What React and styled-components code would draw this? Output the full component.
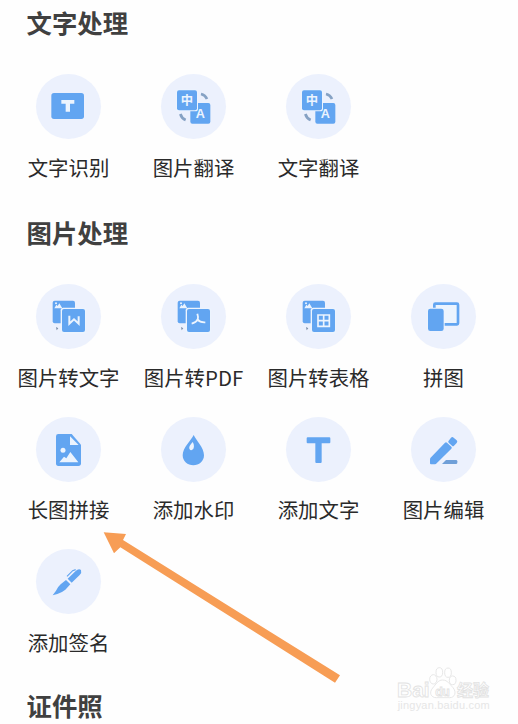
import styled, { createGlobalStyle } from 'styled-components';

const GlobalStyle = createGlobalStyle`
	* {
		box-sizing: border-box;
	}

	body {
		margin: 0;
		background: #fefefe;
		font-family: 'Noto Sans CJK SC', sans-serif;
	}
`;

const PageWrapper = styled.main`
	position: relative;
	height: 724px;
	padding: 4px 0 0 6px;
	overflow: hidden;
`;

const Section = styled.section`
	margin-bottom: 36px;

	&:last-of-type {
		margin: -2.5px 0 0;
	}
`;

const Title = styled.h2`
	height: 36px;
	margin: 0;
	padding-left: 20.5px;
	font-size: 25.4px;
	font-weight: 700;
	line-height: 36px;
	color: #404040;
`;

const Grid = styled.div`
	display: grid;
	grid-template-columns: repeat(4, 125px);
	row-gap: 28.5px;
	margin-top: 34px;
`;

const Tool = styled.div`
	display: flex;
	flex-direction: column;
	align-items: center;
	height: 104px;
`;

const Badge = styled.div`
	width: 65px;
	height: 65px;
	flex-shrink: 0;
	border-radius: 50%;
	background: #ecf1fd;

	svg {
		display: block;
		width: 100%;
		height: 100%;
	}
`;

const Label = styled.span`
	margin-top: 12.5px;
	font-size: 20.4px;
	font-weight: 400;
	line-height: 30px;
	white-space: nowrap;
	color: #2a2a2a;
`;

const Arrow = styled.svg`
	position: absolute;
	left: 100px;
	top: 530px;
	width: 245px;
	height: 156px;
`;

const Watermark = styled.svg`
	position: absolute;
	right: 0;
	bottom: 0;
	width: 138px;
	height: 74px;
`;

const BLUE = '#62a5f1';
const PALE = '#ecf4fe';

const IconBase = ({ children }) => (
	<svg viewBox="18 18 195 195" fill={BLUE}>{children}</svg>
);

const TextScan = () => (
	<IconBase>
		<rect x="64" y="75" width="98" height="78" rx="8" />
		<path d="M94 96h39v11h-13v24h-13v-24H94z" fill={PALE} />
	</IconBase>
);

const Translate = () => (
	<IconBase>
		<rect x="106" y="105" width="60" height="62" rx="6" />
		<rect x="63" y="64" width="66" height="66" rx="8" fill={PALE} />
		<rect x="66" y="67" width="60" height="60" rx="6" />
		<g fill={PALE} fontWeight="700" textAnchor="middle">
			<text x="96" y="110" fontSize="37" fontFamily="Noto Sans CJK SC">中</text>
			<text x="136" y="151" fontSize="38" fontFamily="Liberation Sans">A</text>
		</g>
		<path d="M138 78q13 3 18 15M76 138q4 13 16 18" fill="none" stroke="#86a2c4" strokeWidth="8" />
	</IconBase>
);

// picture sheet behind a front sheet, shared by the three converters
const Convert = ({ children }) => (
	<IconBase>
		<rect x="68" y="68" width="67" height="68" rx="6" />
		<path d="M73 91l6-11 4 4 5-8 9 15z" fill={PALE} />
		<circle cx="78" cy="76" r="3" fill={PALE} />
		<rect x="92" y="89" width="77" height="78" rx="8" fill={PALE} />
		<rect x="96" y="93" width="69" height="69" rx="6" />
		<path d="M78 147l7 4-5 6z" fill="#7c8ea8" />
		{children}
	</IconBase>
);

const ToWord = () => (
	<Convert>
		<path d="M118 113v24l14-13 14 13v-22" fill="none" stroke={PALE} strokeWidth="6" />
	</Convert>
);

const ToPdf = () => (
	<Convert>
		<path d="M127 107q4 12 1 18-5 9-18 12M128 125q7 9 23 8" fill="none" stroke={PALE} strokeWidth="5.5" />
		<path d="M122 129l6-10 6 11z" fill={PALE} />
	</Convert>
);

const ToTable = () => (
	<Convert>
		<path d="M114 111h34v34h-34zM131 111v34M114 128h34" fill="none" stroke={PALE} strokeWidth="5" />
	</Convert>
);

const Collage = () => (
	<IconBase>
		<rect x="88" y="77" width="71" height="62" rx="3" fill={PALE} stroke={BLUE} strokeWidth="8" />
		<rect x="66" y="89" width="53" height="71" rx="9" fill={PALE} />
		<rect x="69" y="92" width="47" height="67" rx="7" />
	</IconBase>
);

const LongImage = () => (
	<IconBase>
		<path d="M85 69h40l28 32v56q0 8-8 8H85q-7 0-7-8V76q0-7 7-7z" />
		<path d="M120 76v26h26z" fill={PALE} />
		<circle cx="99" cy="118" r="7.5" fill={PALE} />
		<path d="M88 154l14-17 7 5 12-19 24 31z" fill={PALE} />
	</IconBase>
);

const Drop = () => (
	<IconBase>
		<path d="M116 72c-7 16-33 37-33 61 0 18 15 30 32 30s32-12 32-30c0-24-24-45-31-61z" />
		<path d="M113 93c-7 8-13 15-9 22 3 5 10 2 12-4 2-7 0-13-3-18z" fill={PALE} />
	</IconBase>
);

const AddText = () => (
	<IconBase>
		<path d="M83 79h65q3 0 3 3v12q0 3-3 3h-23v56q0 3-3 3h-13q-3 0-3-3V97H83q-3 0-3-3V82q0-3 3-3z" />
	</IconBase>
);

const Edit = () => (
	<IconBase>
		<path d="M76 141l44-46q3-3 6 0l13 12q3 3 0 6l-44 44q-2 3-5 3H78q-3 0-3-3v-11q0-2 1-5z" />
		<path d="M131 89l7-9q4-4 8 0l9 8q4 4 0 8l-8 8q-3 3-6 0l-10-9q-3-3 0-6z" />
		<path d="M111 159l12-12h30q4 0 4 4v4q0 4-4 4z" fill="#6f9fd8" />
	</IconBase>
);

const Sign = () => (
	<IconBase>
		<path d="M113 107l24-23q9-9 16-3 3 8-4 15l-24 23z" />
		<path d="M108 111l13 13-15 16q-8 7-24 13l-14 4 10-14q6-12 14-19z" />
		<path d="M111 100l17-17 9-3" fill="none" stroke={BLUE} strokeWidth="3.5" />
	</IconBase>
);

const sections = [
	{
		title: '文字处理',
		tools: [
			{ label: '文字识别', Icon: TextScan },
			{ label: '图片翻译', Icon: Translate },
			{ label: '文字翻译', Icon: Translate }
		]
	},
	{
		title: '图片处理',
		tools: [
			{ label: '图片转文字', Icon: ToWord },
			{ label: '图片转PDF', Icon: ToPdf },
			{ label: '图片转表格', Icon: ToTable },
			{ label: '拼图', Icon: Collage },
			{ label: '长图拼接', Icon: LongImage },
			{ label: '添加水印', Icon: Drop },
			{ label: '添加文字', Icon: AddText },
			{ label: '图片编辑', Icon: Edit },
			{ label: '添加签名', Icon: Sign }
		]
	},
	{ title: '证件照', tools: [] }
];

const ToolSection = ({ title, tools }) => (
	<Section>
		<Title>{title}</Title>
		{tools.length > 0 && (
			<Grid>
				{tools.map(({ label, Icon }) => (
					<Tool key={label}>
						<Badge>
							<Icon />
						</Badge>
						<Label>{label}</Label>
					</Tool>
				))}
			</Grid>
		)}
	</Section>
);

const App = () => (
	<>
		<GlobalStyle />
		<PageWrapper>
			{sections.map((section) => (
				<ToolSection key={section.title} {...section} />
			))}
			<Arrow viewBox="300 30 735 468">
				<path d="M311 37l67 5-9 18 651 406-15 22L361 82l-19 18z" fill="#f79d55" />
			</Arrow>
			<Watermark viewBox="0 0 414 222">
				<g fill="#fff" stroke="#e2e2e2" strokeWidth="2.5" fontFamily="Liberation Sans" fontWeight="700">
					<text x="51" y="141" fontSize="63" textLength="98">Bai</text>
					<ellipse cx="160" cy="88" rx="11" ry="14" />
					<ellipse cx="178" cy="67" rx="10" ry="14" />
					<ellipse cx="204" cy="68" rx="10" ry="14" />
					<ellipse cx="218" cy="91" rx="10" ry="13" />
					<path d="M188 90c15 0 22 14 31 23 12 14 5 30-10 30h-40c-16 0-23-15-11-29 9-10 15-24 30-24z" />
					<text x="166" y="137" fontSize="37" textLength="43">du</text>
					<text x="231" y="138" fontSize="48" fontFamily="Noto Sans CJK SC">经验</text>
				</g>
				<text x="53" y="177" fontSize="33" textLength="276" fill="#e6e6e6" fontFamily="Liberation Sans">jingyan.baidu.com</text>
			</Watermark>
		</PageWrapper>
	</>
);

export default App;
